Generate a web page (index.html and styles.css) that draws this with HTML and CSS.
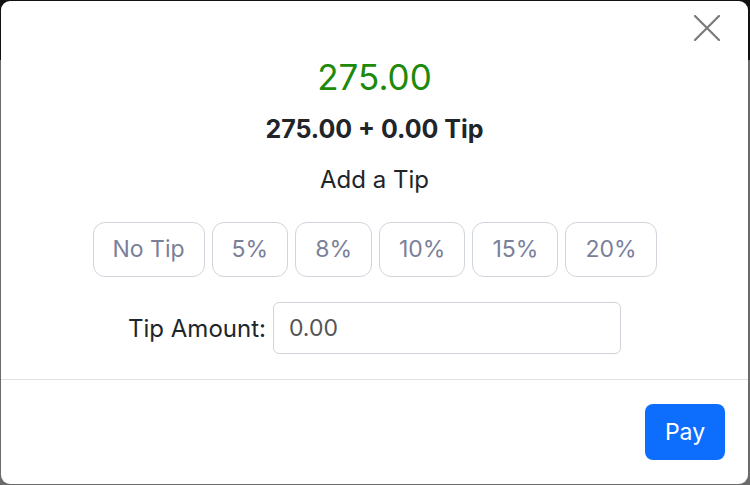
FILE: index.html
```html
<!DOCTYPE html>
<html lang="en">
<head>
<meta charset="utf-8">
<title>Add a Tip</title>
<link rel="stylesheet" href="styles.css">
</head>
<body>
<div class="modal">
  <div class="modal-header">
    <button class="close" aria-label="Close">
      <svg width="26" height="26" viewBox="0 0 26 26"><path d="M1 1 L25 25 M25 1 L1 25" stroke="#7a7a7a" stroke-width="2.2" stroke-linecap="round" fill="none"/></svg>
    </button>
  </div>
  <div class="modal-body">
    <div class="total">275.00</div>
    <div class="breakdown">275.00 + 0.00 Tip</div>
    <div class="add-tip">Add a Tip</div>
    <div class="tips">
      <button class="tip">No Tip</button>
      <button class="tip">5%</button>
      <button class="tip">8%</button>
      <button class="tip">10%</button>
      <button class="tip">15%</button>
      <button class="tip">20%</button>
    </div>
    <div class="amount-row">
      <label class="amount-label" for="amt">Tip Amount:</label>
      <input id="amt" class="amount-input" type="text" value="0.00">
    </div>
  </div>
  <div class="modal-footer">
    <button class="pay">Pay</button>
  </div>
</div>
</body>
</html>
```
FILE: styles.css
```css
* { box-sizing: border-box; }
html, body { margin: 0; height: 485px; overflow: hidden; }
body {
  background: linear-gradient(#111 0, #111 60px, #6b6b6b 60px);
  padding: 1px 2px 1px 1px;
  font-family: Inter, "Noto Sans", sans-serif;
  color: #212529;
}
.modal {
  background: #fff;
  height: 483px;
  border-radius: 9px;
  display: flex;
  flex-direction: column;
}
.modal-header {
  height: 56px;
  display: flex;
  justify-content: flex-end;
  padding: 14px 28px 0 0;
}
.close {
  border: 0;
  background: none;
  padding: 0;
  width: 26px;
  height: 26px;
  cursor: pointer;
}
.close svg { display: block; }
.modal-body {
  display: flex;
  flex-direction: column;
  align-items: center;
  padding-bottom: 25px;
  border-bottom: 1px solid #dee2e6;
}
.total {
  font-size: 35px;
  line-height: 40px;
  color: #1e8a0a;
}
.breakdown {
  margin-top: 16px;
  font-size: 25px;
  line-height: 32px;
  font-weight: 700;
}
.add-tip {
  margin-top: 19px;
  font-size: 24px;
  line-height: 32px;
}
.tips {
  margin-top: 26px;
  display: flex;
  gap: 7px;
}
.tip {
  font-family: inherit;
  font-size: 23px;
  line-height: 33px;
  padding: 10px 19px;
  background: #fff;
  color: #7a7f9a;
  border: 1px solid #d0d4db;
  border-radius: 12px;
}
.amount-row {
  margin-top: 25px;
  display: flex;
  align-items: center;
  gap: 7px;
}
.amount-label {
  font-size: 24px;
}
.amount-input {
  width: 348px;
  height: 52px;
  font-family: inherit;
  font-size: 23px;
  color: #555;
  padding: 0 15px;
  border: 1px solid #ced4da;
  border-radius: 6px;
  outline: none;
}
.modal-footer {
  display: flex;
  justify-content: flex-end;
  padding: 24px 23px 24px 0;
}
.pay {
  width: 80px;
  height: 56px;
  font-family: inherit;
  font-size: 23px;
  color: #fff;
  background: #0d6efd;
  border: 0;
  border-radius: 8px;
}
```
